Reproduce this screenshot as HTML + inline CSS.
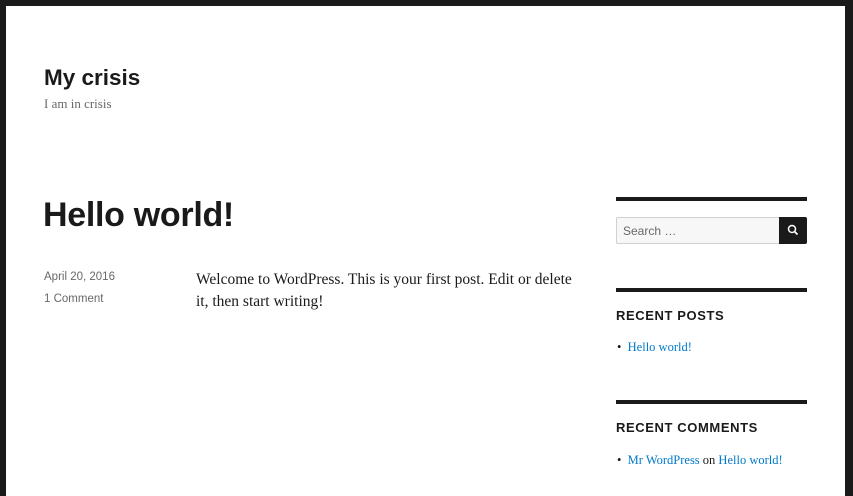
<!DOCTYPE html>
<html><head><style>
*{margin:0;padding:0;box-sizing:border-box}
body{width:853px;height:483px;overflow:hidden;background:#1a1a1a;position:relative;font-family:"Liberation Sans",sans-serif;color:#1a1a1a}
.page{position:absolute;left:6px;top:6px;width:839px;height:490px;background:#fff}
.a{position:absolute;white-space:nowrap}
.rule{position:absolute;left:616px;width:191px;height:4px;background:#1a1a1a}
a{color:#007acc;text-decoration:none}
</style></head><body>
<div class="page"></div>
<div class="a" style="left:44px;top:65px;font-size:22.5px;font-weight:bold">My crisis</div>
<div class="a" style="left:44px;top:96px;font-size:13px;color:#686868;font-family:'Liberation Serif',serif">I am in crisis</div>
<div class="a" style="left:43px;top:196px;font-size:34px;font-weight:bold;letter-spacing:-0.3px">Hello world!</div>
<div class="a" style="left:44px;top:271px;font-size:11.5px;color:#686868">April 20, 2016</div>
<div class="a" style="left:44px;top:293px;font-size:11.5px;color:#686868">1 Comment</div>
<div class="a" style="left:196px;top:269px;font-size:15.5px;line-height:22px;font-family:'Liberation Serif',serif">Welcome to WordPress. This is your first post. Edit or delete<br>it, then start writing!</div>
<div class="rule" style="top:197px"></div>
<div class="a" style="left:616px;top:217px;width:164px;height:27px;background:#f7f7f7;border:1px solid #d1d1d1;border-radius:2px 0 0 2px;font-size:12px;color:#686868;padding:6px 6px">Search …</div>
<div class="a" style="left:779px;top:217px;width:28px;height:27px;background:#1a1a1a;border-radius:0 2px 2px 0">
<svg width="28" height="27" viewBox="0 0 28 27"><circle cx="13" cy="12" r="3.5" fill="none" stroke="#fff" stroke-width="1.5"/><path d="M15.5 14.5l3 3" stroke="#fff" stroke-width="1.8"/></svg></div>
<div class="rule" style="top:288px"></div>
<div class="a" style="left:616px;top:308px;font-size:13px;font-weight:bold;letter-spacing:0.6px">RECENT POSTS</div>
<div class="a" style="left:617px;top:340px;font-size:12.5px;font-family:'Liberation Serif',serif">•&nbsp;&nbsp;<a>Hello world!</a></div>
<div class="rule" style="top:400px"></div>
<div class="a" style="left:616px;top:420px;font-size:13px;font-weight:bold;letter-spacing:0.6px">RECENT COMMENTS</div>
<div class="a" style="left:617px;top:453px;font-size:12.5px;font-family:'Liberation Serif',serif">•&nbsp;&nbsp;<a>Mr WordPress</a> on <a>Hello world!</a></div>
</body></html>
